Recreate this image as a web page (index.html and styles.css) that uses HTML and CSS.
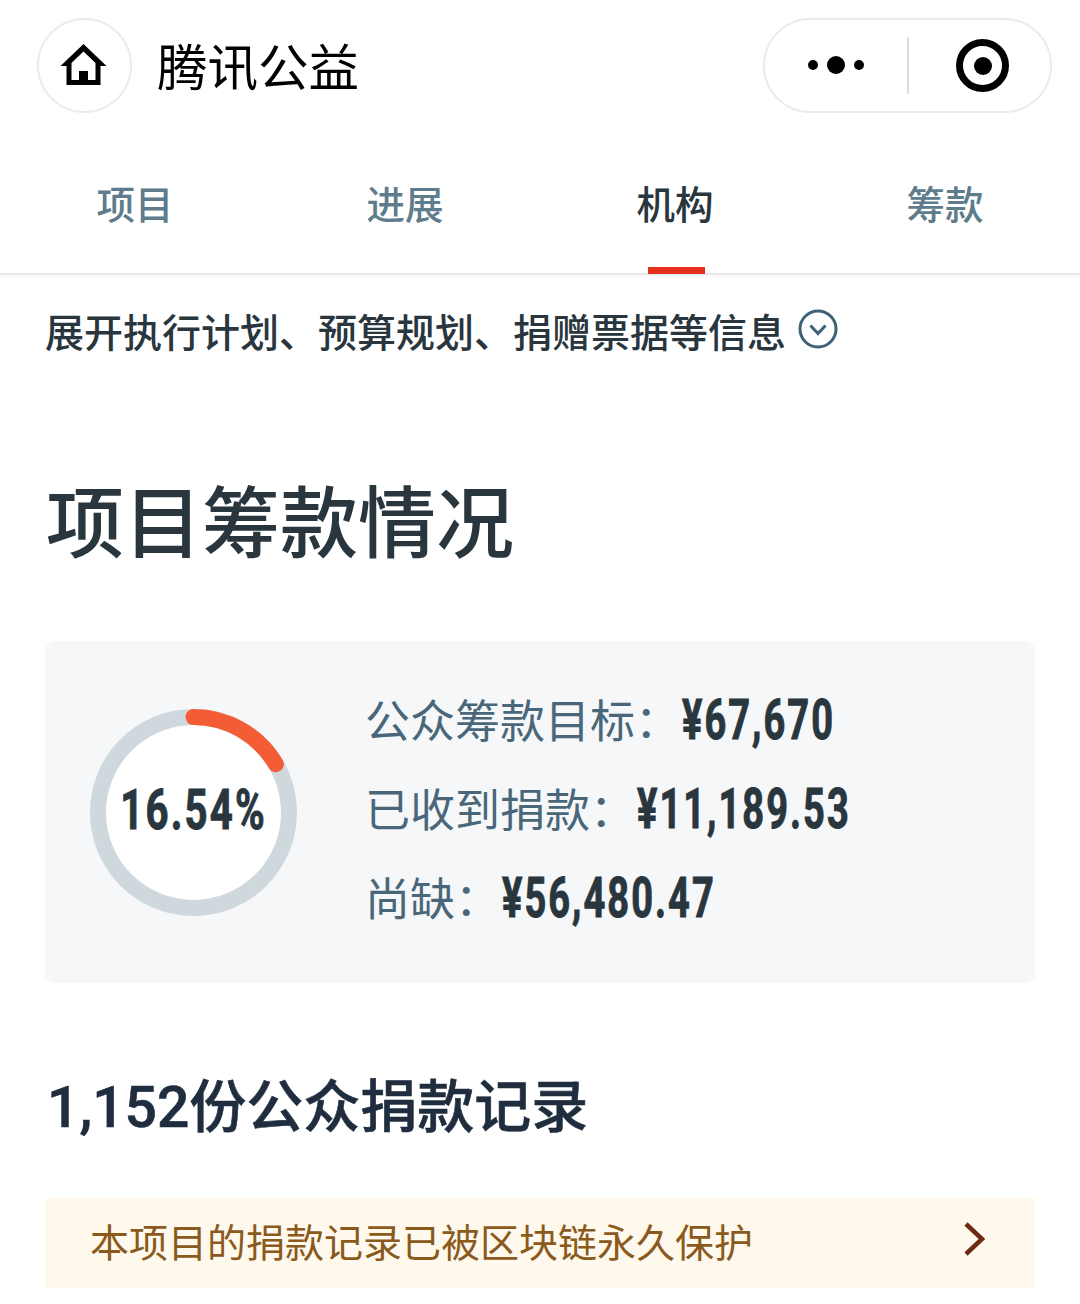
FILE: index.html
```html
<!DOCTYPE html>
<html>
<head>
    <meta charset="UTF-8">
    <meta name="viewport" content="width=device-width, initial-scale=1.0">
    <title>腾讯公益</title>
    <link rel="stylesheet" href="styles.css">
</head>

<body>
    <header class="topbar">
        <div class="home-btn">
            <svg class="home-icon" viewBox="0 0 48 44" width="51" height="44">
                <path d="M24 2 L47 24 L41 24 L41 43 L7 43 L7 24 L1 24 Z M24 9.5 L12 21 L12 38 L19.5 38 L19.5 29 L28.500 29 L28.500 38 L36 38 L36 21 Z" fill="#000" fill-rule="evenodd"/>
            </svg>
        </div>
        <div class="app-title">腾讯公益</div>
        <div class="capsule">
            <div class="capsule-dots">
                <span class="dot"></span>
                <span class="dot dot-big"></span>
                <span class="dot"></span>
            </div>
            <div class="capsule-line"></div>
            <div class="capsule-target"><span class="target-core"></span></div>
        </div>
    </header>

    <nav class="tabs">
        <div class="tab">项目</div>
        <div class="tab">进展</div>
        <div class="tab tab-active">机构</div>
        <div class="tab">筹款</div>
    </nav>

    <div class="expand-row">
        <span>展开执行计划、预算规划、捐赠票据等信息</span>
        <svg class="expand-icon" viewBox="0 0 40 40" width="40" height="40">
            <circle cx="20" cy="20" r="18" fill="none" stroke="#3f6176" stroke-width="3"/>
            <path d="M12.500 16.500 L20 24.500 L27.500 16.500" fill="none" stroke="#3f6176" stroke-width="3"/>
        </svg>
    </div>

    <h1 class="page-heading">项目筹款情况</h1>

    <section class="summary-card">
        <div class="ring">
            <svg viewBox="0 0 207 207" width="207" height="207">
                <circle cx="103.5" cy="103.5" r="95.5" fill="#fff" stroke="#cfd8dd" stroke-width="16"/>
                <circle class="ring-value" cx="103.5" cy="103.5" r="95.5" fill="none" stroke="#f45c36" stroke-width="16" stroke-linecap="round" pathLength="100" stroke-dasharray="16.54 100"/>
            </svg>
            <div class="ring-label">16.54%</div>
        </div>
        <div class="stats">
            <div class="stat"><span class="stat-name">公众筹款目标&#xFF1A;</span><span class="stat-num">¥67,670</span></div>
            <div class="stat"><span class="stat-name">已收到捐款&#xFF1A;</span><span class="stat-num">¥11,189.53</span></div>
            <div class="stat"><span class="stat-name">尚缺&#xFF1A;</span><span class="stat-num">¥56,480.47</span></div>
        </div>
    </section>

    <h2 class="records-heading">1,152份公众捐款记录</h2>

    <div class="chain-banner">
        <span>本项目的捐款记录已被区块链永久保护</span>
        <svg class="chain-arrow" viewBox="0 0 24 36" width="24" height="36">
            <path d="M4 3 L20 18 L4 33" fill="none" stroke="#6e2a17" stroke-width="4.500"/>
        </svg>
    </div>
</body>

</html>
```

FILE: styles.css
```css
body {
    margin: 0;
    padding: 0;
    background-color: #fff;
    color: #29363e;
    font-family: "Noto Sans CJK SC", "Noto Sans", sans-serif;
    overflow: hidden;
}

.topbar {
    display: flex;
    align-items: center;
    height: 95px;
    padding: 18px 28px 0 37px;
}

.home-btn {
    display: flex;
    align-items: center;
    justify-content: center;
    width: 95px;
    height: 95px;
    box-sizing: border-box;
    border: 2px solid #ebebeb;
    border-radius: 50%;
}

.home-icon {
    margin: -3px 3px 0 0;
}

.app-title {
    margin: -4px 0 0 25px;
    font-size: 50.500px;
    line-height: 94px;
    color: #000;
}

.capsule {
    display: flex;
    align-items: center;
    width: 289px;
    height: 95px;
    box-sizing: border-box;
    margin-left: auto;
    border: 2px solid #ebebeb;
    border-radius: 48px;
}

.capsule-dots {
    display: flex;
    align-items: center;
    justify-content: center;
    gap: 9px;
    width: 141px;
    margin-top: -2px;
}

.dot {
    width: 10px;
    height: 10px;
    background-color: #000;
    border-radius: 50%;
}

.dot-big {
    width: 18px;
    height: 18px;
}

.capsule-line {
    width: 2px;
    height: 57px;
    margin-left: 1px;
    background-color: #ddd;
}

.capsule-target {
    display: flex;
    align-items: center;
    justify-content: center;
    width: 53px;
    height: 53px;
    box-sizing: border-box;
    margin-left: 47px;
    border: 7px solid #000;
    border-radius: 50%;
}

.target-core {
    width: 18px;
    height: 18px;
    background-color: #000;
    border-radius: 50%;
}

.tabs {
    display: grid;
    grid-template-columns: repeat(4, 270px);
    height: 160px;
    border-bottom: 2px solid #e6e8ea;
    box-shadow: 0 2px 6px rgba(0, 0, 0, 0.03);
}

.tab {
    position: relative;
    padding-top: 63px;
    text-align: center;
    font-size: 38.500px;
    line-height: 52px;
    font-weight: 500;
    color: #5f7c8c;
}

.tab-active {
    color: #29363e;
}

.tab-active::after {
    content: "";
    position: absolute;
    left: 108px;
    bottom: -1px;
    width: 57px;
    height: 7px;
    background-color: #e5311d;
}

.expand-row {
    display: flex;
    align-items: center;
    gap: 12px;
    height: 56px;
    padding: 27px 0 0 45px;
    font-size: 39px;
    font-weight: 500;
    color: #29363e;
}

.expand-icon {
    margin-top: -3px;
}

.page-heading {
    margin: 105px 0 0 46px;
    font-size: 78px;
    line-height: 110px;
    font-weight: 500;
    color: #29363e;
}

.summary-card {
    display: flex;
    align-items: center;
    height: 342px;
    margin: 68px 45px 0;
    padding-left: 45px;
    background-color: #f5f7f9;
    border-radius: 10px;
}

.ring {
    position: relative;
    width: 207px;
    height: 207px;
    flex: none;
}

.ring-value {
    transform: rotate(-90deg);
    transform-origin: center;
}

/* no condensed face installed, so the numerals are squeezed */
.ring-label {
    position: absolute;
    top: -2px;
    left: 0;
    right: 0;
    text-align: center;
    line-height: 207px;
    font-family: Roboto, "Liberation Sans", sans-serif;
    font-size: 55px;
    font-weight: 700;
    letter-spacing: 3px;
    color: #29363e;
    -webkit-text-stroke: 1px #29363e;
    transform: scaleX(0.73);
}

.stats {
    margin: -9px 0 0 68px;
}

.stat {
    display: flex;
    align-items: center;
    height: 89px;
}

.stat-name {
    font-size: 45px;
    color: #4a6779;
}

.stat-num {
    display: inline-block;
    margin: 2px 0 0 2px;
    font-family: Roboto, "Liberation Sans", sans-serif;
    font-size: 55px;
    font-weight: 700;
    letter-spacing: 3px;
    color: #29363e;
    -webkit-text-stroke: 1px #29363e;
    transform: scaleX(0.69);
    transform-origin: left center;
}

.records-heading {
    margin: 83px 0 0 47px;
    font-family: Roboto, "Noto Sans CJK SC", sans-serif;
    font-size: 57px;
    line-height: 84px;
    font-weight: 500;
    color: #1f2d3f;
    -webkit-text-stroke: 0.6px #1f2d3f;
}

.chain-banner {
    display: flex;
    align-items: center;
    justify-content: space-between;
    height: 90px;
    box-sizing: border-box;
    margin: 48px 45px 0;
    padding: 0 49px 7px 45px;
    background-color: #fff8ec;
    font-size: 39px;
    color: #8a5a1c;
}

.chain-arrow {
    margin-top: -2px;
}
```
